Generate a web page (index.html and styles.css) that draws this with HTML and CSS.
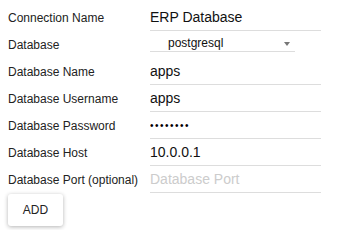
FILE: index.html
```html
<!DOCTYPE html>
<html lang="en">
<head>
    <meta charset="UTF-8">
    <meta name="viewport" content="width=device-width, initial-scale=1.0">
    <title>Add Connection</title>
    <link rel="stylesheet" href="styles.css">
</head>
<body>

<form class="conn-form" onsubmit="return false">

    <!-- Campi della connessione -->
    <div class="fields">
        <label class="field-label" for="connName">Connection Name</label>
        <input class="field-input" id="connName" type="text" value="ERP Database">

        <label class="field-label" for="dbType">Database</label>
        <div class="select-wrap">
            <select class="field-select" id="dbType">
                <option>postgresql</option>
                <option>mysql</option>
                <option>oracle</option>
                <option>mssql</option>
            </select>
        </div>

        <label class="field-label" for="dbName">Database Name</label>
        <input class="field-input" id="dbName" type="text" value="apps">

        <label class="field-label" for="dbUser">Database Username</label>
        <input class="field-input" id="dbUser" type="text" value="apps">

        <label class="field-label" for="dbPass">Database Password</label>
        <input class="field-input password" id="dbPass" type="password" value="apps1234">

        <label class="field-label" for="dbHost">Database Host</label>
        <input class="field-input" id="dbHost" type="text" value="10.0.0.1">

        <label class="field-label" for="dbPort">Database Port (optional)</label>
        <input class="field-input" id="dbPort" type="text" placeholder="Database Port">
    </div>

    <button class="add-btn" type="submit">ADD</button>
</form>

</body>
</html>
```

FILE: styles.css
```css
/* Stili di base */
body {
    font-family: "Liberation Sans", Arial, sans-serif;
    background-color: #fff;
    margin: 0;
    padding: 0;
    color: #222;
}

.conn-form {
    padding: 4px 8px;
}

.fields {
    display: grid;
    grid-template-columns: 142px 171px;
    grid-auto-rows: 27px;
    align-items: center;
}

.field-label {
    font-size: 12px;
    color: #222;
}

.field-input {
    box-sizing: border-box;
    width: 100%;
    height: 27px;
    margin: 0;
    padding: 0;
    border: none;
    border-bottom: 1px solid #ddd;
    font-family: inherit;
    font-size: 14px;
    color: #111;
    background: transparent;
    outline: none;
}

.field-input::placeholder {
    color: #ccc;
}

/* puntini della password più piccoli */
.field-input.password {
    font-size: 10px;
    letter-spacing: 1.5px;
    padding-top: 1px;
    color: #000;
}

.select-wrap {
    position: relative;
    align-self: start;
    margin-top: 4px;
    width: 145px;
}

.field-select {
    box-sizing: border-box;
    display: block;
    width: 100%;
    height: 17px;
    margin: 0;
    padding: 0 0 0 18px;
    border: none;
    border-bottom: 1px solid #ddd;
    border-radius: 0;
    font-family: inherit;
    font-size: 12px;
    color: #111;
    background: transparent;
    appearance: none;
    -webkit-appearance: none;
    outline: none;
}

/* freccia del menu a tendina */
.select-wrap::after {
    content: "";
    position: absolute;
    right: 5px;
    top: 7px;
    border-left: 3px solid transparent;
    border-right: 3px solid transparent;
    border-top: 4px solid #777;
    pointer-events: none;
}

.add-btn {
    margin-top: 1px;
    width: 55px;
    height: 32px;
    padding: 0;
    border: none;
    border-radius: 3px;
    background-color: #fff;
    box-shadow: 0 1px 4px rgba(0, 0, 0, 0.3);
    font-family: inherit;
    font-size: 12px;
    color: #222;
    cursor: pointer;
}
```
